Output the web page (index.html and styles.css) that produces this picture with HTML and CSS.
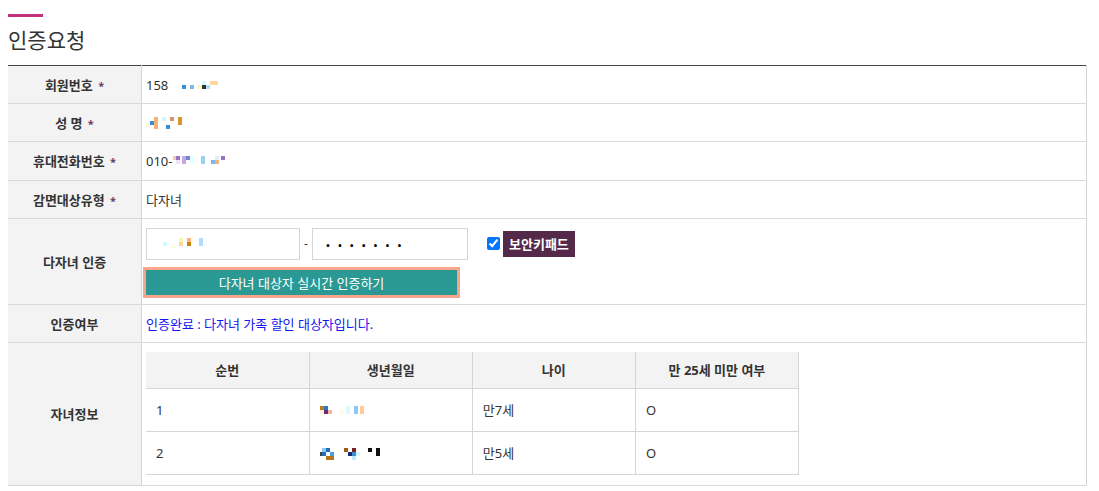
FILE: index.html
```html
<!DOCTYPE html>
<html lang="ko">
<head>
	<meta charset="utf-8">
	<title>인증요청</title>
	<link rel="stylesheet" href="styles.css">
</head>
<body>
	<div class="title-bar"></div>
	<h2 class="title">인증요청</h2>

	<table class="form">
		<tr>
			<th>회원번호 <em>*</em></th>
			<td>158
				<svg class="mask m1" width="40" height="10" viewBox="0 0 40 10">
					<rect x="0" y="4" width="4" height="4" fill="#3a8fd4"/>
					<rect x="8" y="4" width="4" height="4" fill="#7dbcef"/>
					<rect x="15" y="4" width="4" height="4" fill="#fff6c8"/>
					<rect x="20" y="0" width="4" height="4" fill="#d4f8ff"/>
					<rect x="20" y="4" width="4" height="4" fill="#333"/>
					<rect x="24" y="4" width="4" height="4" fill="#aee1f6"/>
					<rect x="28" y="0" width="8" height="4" fill="#ffd79c"/>
				</svg>
			</td>
		</tr>
		<tr>
			<th>성 명 <em>*</em></th>
			<td>
				<svg class="mask m2" width="40" height="14" viewBox="0 0 40 14">
					<rect x="0" y="6" width="4" height="4" fill="#fff8d8"/>
					<rect x="4" y="4" width="4" height="4" fill="#3a8fd4"/>
					<rect x="8" y="0" width="4" height="12" fill="#f2b376"/>
					<rect x="16" y="0" width="4" height="4" fill="#d2f8ff"/>
					<rect x="20" y="8" width="4" height="4" fill="#3a8fd4"/>
					<rect x="24" y="0" width="4" height="4" fill="#d8936e"/>
					<rect x="32" y="0" width="4" height="8" fill="#d8952c"/>
				</svg>
			</td>
		</tr>
		<tr>
			<th>휴대전화번호 <em>*</em></th>
			<td>010-<svg class="mask m3" width="60" height="12" viewBox="0 0 60 12">
					<rect x="0" y="0" width="3" height="4" fill="#eecfa8"/>
					<rect x="3" y="0" width="4" height="4" fill="#9a72c2"/>
					<rect x="3" y="4" width="4" height="4" fill="#f4e2f8"/>
					<rect x="9" y="0" width="4" height="8" fill="#c2a8e4"/>
					<rect x="13" y="0" width="4" height="4" fill="#6d8ad0"/>
					<rect x="17" y="0" width="6" height="8" fill="#eaffff"/>
					<rect x="28" y="0" width="4" height="8" fill="#9ccff5"/>
					<rect x="38" y="4" width="4" height="4" fill="#7fb7ea"/>
					<rect x="42" y="4" width="4" height="4" fill="#f2b376"/>
					<rect x="42" y="0" width="4" height="4" fill="#e0eeff"/>
					<rect x="48" y="0" width="4" height="4" fill="#9a72c2"/>
				</svg>
			</td>
		</tr>
		<tr>
			<th>감면대상유형 <em>*</em></th>
			<td>다자녀</td>
		</tr>
		<tr>
			<th>다자녀 인증</th>
			<td class="auth">
				<div class="auth-line">
					<div class="field">
						<svg class="mask" width="44" height="12" viewBox="0 0 44 12">
							<rect x="0" y="4" width="4" height="4" fill="#ccfbff"/>
							<rect x="8" y="6" width="4" height="4" fill="#fffbe2"/>
							<rect x="16" y="0" width="4" height="4" fill="#fff2b0"/>
							<rect x="16" y="4" width="4" height="4" fill="#fdd89a"/>
							<rect x="24" y="0" width="4" height="4" fill="#f5b77a"/>
							<rect x="24" y="4" width="4" height="4" fill="#c8860a"/>
							<rect x="36" y="0" width="4" height="8" fill="#a8dfff"/>
						</svg>
					</div>
					<span class="dash">-</span>
					<div class="field pw">&#183;&#183;&#183;&#183;&#183;&#183;&#183;</div>
					<input type="checkbox" class="keypad-check" checked>
					<span class="keypad">보안키패드</span>
				</div>
				<button class="auth-btn">다자녀 대상자 실시간 인증하기</button>
			</td>
		</tr>
		<tr>
			<th>인증여부</th>
			<td class="result">인증완료 : 다자녀 가족 할인 대상자입니다.</td>
		</tr>
		<tr>
			<th>자녀정보</th>
			<td class="kids">
				<table class="kid-list">
					<tr>
						<th>순번</th>
						<th>생년월일</th>
						<th>나이</th>
						<th>만 25세 미만 여부</th>
					</tr>
					<tr>
						<td>1</td>
						<td>
							<svg class="mask" width="50" height="10" viewBox="0 0 50 10">
								<rect x="0" y="0" width="4" height="4" fill="#c07a20"/>
								<rect x="0" y="4" width="4" height="4" fill="#fff3e0"/>
								<rect x="4" y="0" width="4" height="4" fill="#1e7bc4"/>
								<rect x="4" y="4" width="4" height="4" fill="#6a2a80"/>
								<rect x="8" y="4" width="4" height="4" fill="#f6b59a"/>
								<rect x="20" y="4" width="4" height="4" fill="#fffbe8"/>
								<rect x="26" y="0" width="4" height="8" fill="#dffaff"/>
								<rect x="34" y="0" width="4" height="8" fill="#8cc8f4"/>
								<rect x="40" y="0" width="4" height="8" fill="#ffcc99"/>
							</svg>
						</td>
						<td>만7세</td>
						<td>O</td>
					</tr>
					<tr>
						<td>2</td>
						<td>
							<svg class="mask" width="64" height="12" viewBox="0 0 64 12">
								<rect x="0" y="4" width="2" height="4" fill="#444"/>
								<rect x="2" y="0" width="4" height="4" fill="#8cc8f4"/>
								<rect x="2" y="4" width="4" height="4" fill="#1e6fb8"/>
								<rect x="6" y="0" width="4" height="4" fill="#1e6fb8"/>
								<rect x="6" y="8" width="4" height="4" fill="#b8761a"/>
								<rect x="10" y="4" width="4" height="4" fill="#4aa0e0"/>
								<rect x="10" y="8" width="4" height="4" fill="#b8761a"/>
								<rect x="24" y="0" width="4" height="4" fill="#a05a18"/>
								<rect x="28" y="4" width="4" height="4" fill="#1a2a70"/>
								<rect x="32" y="0" width="4" height="4" fill="#7a2020"/>
								<rect x="32" y="4" width="4" height="4" fill="#3a8fd4"/>
								<rect x="32" y="8" width="4" height="4" fill="#bfeaff"/>
								<rect x="36" y="4" width="4" height="4" fill="#d8f4ff"/>
								<rect x="48" y="0" width="4" height="4" fill="#111"/>
								<rect x="56" y="0" width="4" height="8" fill="#111"/>
							</svg>
						</td>
						<td>만5세</td>
						<td>O</td>
					</tr>
				</table>
			</td>
		</tr>
	</table>
</body>
</html>
```

FILE: styles.css
```css
body{
	margin: 8px;
	font-family: "Noto Sans", "Noto Sans CJK KR", sans-serif;
	font-size: 13px;
	color: #333;
	background: #fff;
}

.title-bar{
	width: 35px;
	height: 3px;
	margin-top: 6px;
	background: #c2307b;
}

.title{
	font-size: 21px;
	font-weight: 400;
	line-height: 30px;
	margin: 8px 0 10px;
	color: #333;
}

.form{
	width: 1079px;
	border-collapse: collapse;
	border-top: 1px solid #444;
	border-right: 1px solid #d3d3d3;
}

.form > tbody > tr > th{
	width: 133px;
	height: 37.2px;
	padding: 0;
	background: #f3f3f3;
	font-weight: bold;
	text-align: center;
	border-right: 1px solid #d5d5d5;
	border-bottom: 1px solid #d9d9d9;
}

.form > tbody > tr > td{
	padding: 0 4px;
	border-bottom: 1px solid #d9d9d9;
}

.form em{
	font-style: normal;
	color: #6b3a66;
	font-size: 11px;
	margin-left: 2px;
}

.mask{
	vertical-align: middle;
	margin-left: 10px;
}

.m2{
	margin-left: 0;
}

.m3{
	margin-left: 0;
}

.auth{
	padding: 9px 4px 9px !important;
}

.auth-line{
	display: flex;
	align-items: center;
}

.field{
	box-sizing: border-box;
	width: 154px;
	height: 32px;
	border: 1px solid #d5d5d5;
	display: flex;
	align-items: center;
	padding-left: 16px;
}

.field .mask{
	margin-left: 0;
}

.field.pw{
	width: 156px;
	padding-left: 12px;
	font-size: 22px;
	letter-spacing: 6px;
	color: #000;
	line-height: 1;
}

.dash{
	width: 12px;
	text-align: center;
	font-size: 12px;
}

.keypad-check{
	margin: 0 3px 0 19px;
	width: 13px;
	height: 13px;
}

.keypad{
	background: #55294a;
	color: #fff;
	font-weight: bold;
	font-size: 13px;
	line-height: 26px;
	padding: 0 6px;
}

.auth-btn{
	display: block;
	width: 311px;
	height: 25px;
	margin-top: 10px;
	border: none;
	background: #2a9994;
	color: #fff;
	font-family: inherit;
	font-size: 13px;
	box-shadow: 0 0 0 3px #f8a58b;
	padding: 0;
}

.result{
	color: #1515f0;
}

.kids{
	padding: 9px 4px 10px !important;
}

.kid-list{
	width: 653px;
	border-collapse: collapse;
}

.kid-list th,
.kid-list td{
	width: 25%;
	border-right: 1px solid #d5d5d5;
	border-bottom: 1px solid #d5d5d5;
}

.kid-list th{
	height: 36px;
	background: #f3f3f3;
	font-weight: bold;
	text-align: center;
	padding: 0;
}

.kid-list td{
	height: 42px;
	padding: 0 10px;
}

.kid-list .mask{
	margin-left: 0;
}
```
